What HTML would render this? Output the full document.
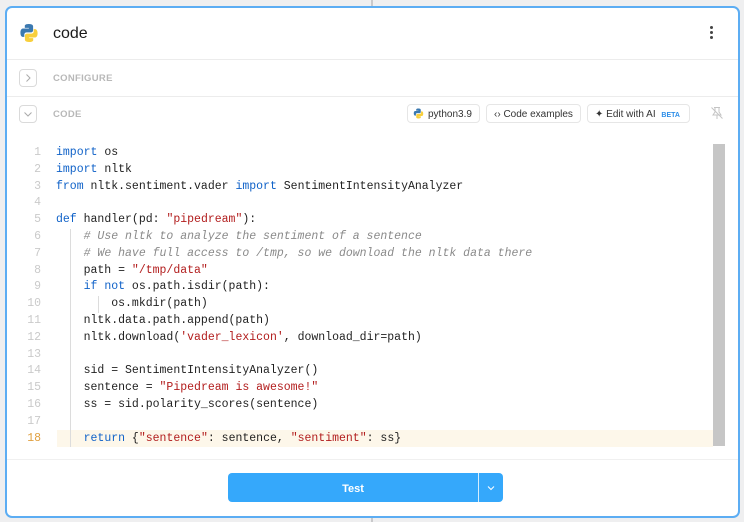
<!DOCTYPE html>
<html><head><meta charset="utf-8"><style>
body{margin:0;width:744px;height:522px;background:#efeff0;position:relative;overflow:hidden;font-family:"Liberation Sans",sans-serif}
.vl{position:absolute;left:371px;width:2px;background:#c9c9cb}
.card{position:absolute;left:5px;top:6px;width:731px;height:508px;border:2px solid #5cadf3;border-radius:7px;background:#fff}
.hdr{position:absolute;left:0;top:0;right:0;height:51px;border-bottom:1px solid #ececec}
.sec{position:absolute;left:0;right:0;height:36px;border-bottom:1px solid #ececec}
.chev{position:absolute;left:12px;width:18px;height:18px;border:1px solid #dadada;border-radius:4px;box-sizing:border-box}
.lbl{position:absolute;left:46px;font-size:9.5px;font-weight:bold;color:#b8b8b8;letter-spacing:.3px}
.btn{position:absolute;top:96px;height:19px;border:1px solid #e6e6e6;border-radius:4px;font-size:10px;color:#333;line-height:19px;padding:0 7px;box-sizing:border-box;white-space:nowrap}
.code{position:absolute;left:0;top:137px;font-family:"Liberation Mono",monospace;font-size:11.5px;line-height:16.8px;color:#1f1f1f}
.ln{position:absolute;left:0;width:34px;text-align:right;color:#cacaca}
.tx{position:absolute;left:49px;white-space:pre}
.k{color:#1062c8}.s{color:#b21d1d}.c{color:#8a8a8a;font-style:italic}
.g{position:absolute;width:1px;background:#dcdcdc}
</style></head><body>
<div class="vl" style="top:0;height:6px"></div><div class="vl" style="top:516px;height:6px"></div>
<div class="card">
 <div class="hdr">
  <svg style="position:absolute;left:12px;top:15px" width="20" height="20" viewBox="0 0 20 20"><path d="M9.8 1C5.5 1 5.8 2.9 5.8 2.9V4.9H9.9V5.5H4.2S1.4 5.2 1.4 9.6 3.8 13.9 3.8 13.9H5.3V11.8S5.2 9.4 7.7 9.4H11.8S14.1 9.4 14.1 7.2V3.5S14.5 1 9.8 1Z" fill="#3b79b0"/><path d="M10.2 19C14.5 19 14.2 17.1 14.2 17.1V15.1H10.1V14.5H15.8S18.6 14.8 18.6 10.4 16.2 6.1 16.2 6.1H14.7V8.2S14.8 10.6 12.3 10.6H8.2S5.9 10.6 5.9 12.8V16.5S5.5 19 10.2 19Z" fill="#f8cf3c"/></svg>
  <div style="position:absolute;left:46px;top:17px;font-size:16px;color:#1a1a1a">code</div>
  <div style="position:absolute;left:703px;top:18px;width:3px;height:14px"><div style="width:3px;height:3px;background:#444;border-radius:50%;margin-bottom:2px"></div><div style="width:3px;height:3px;background:#444;border-radius:50%;margin-bottom:2px"></div><div style="width:3px;height:3px;background:#444;border-radius:50%"></div></div>
 </div>
 <div class="sec" style="top:52px">
  <div class="chev" style="top:9px"><svg width="16" height="16" viewBox="0 0 16 16"><path d="M6.5 4.5L10 8 6.5 11.5" stroke="#aaa" fill="none"/></svg></div>
  <div class="lbl" style="top:13px">CONFIGURE</div>
 </div>
 <div class="chev" style="top:97px"><svg width="16" height="16" viewBox="0 0 16 16"><path d="M4.5 6.5L8 10 11.5 6.5" stroke="#aaa" fill="none"/></svg></div>
 <div class="lbl" style="top:101px">CODE</div>
 <div class="btn" style="left:400px;width:73px;padding-left:20px">python3.9<svg style="position:absolute;left:5px;top:3px" width="11" height="11" viewBox="0 0 20 20"><path d="M9.8 1C5.5 1 5.8 2.9 5.8 2.9V4.9H9.9V5.5H4.2S1.4 5.2 1.4 9.6 3.8 13.9 3.8 13.9H5.3V11.8S5.2 9.4 7.7 9.4H11.8S14.1 9.4 14.1 7.2V3.5S14.5 1 9.8 1Z" fill="#3b79b0"/><path d="M10.2 19C14.5 19 14.2 17.1 14.2 17.1V15.1H10.1V14.5H15.8S18.6 14.8 18.6 10.4 16.2 6.1 16.2 6.1H14.7V8.2S14.8 10.6 12.3 10.6H8.2S5.9 10.6 5.9 12.8V16.5S5.5 19 10.2 19Z" fill="#f8cf3c"/></svg></div>
 <div class="btn" style="left:479px;width:95px">&lsaquo;&rsaquo; Code examples</div>
 <div class="btn" style="left:580px;width:103px">✦ Edit with AI <span style="color:#2d8ee8;font-size:7px;font-weight:bold;margin-left:3px">BETA</span></div>
 <svg style="position:absolute;left:703px;top:98px" width="14" height="14" viewBox="0 0 14 14"><path d="M4 1.5H10M5 1.5V6L3 9H11L9 6V1.5M7 9V13M1.5 1.5L12.5 12.5" stroke="#c4c4c4" fill="none"/></svg>
 <div style="position:absolute;left:50px;top:422px;width:656px;height:17px;background:#fdf7ea"></div>
 <div style="position:absolute;left:706px;top:136px;width:12px;height:302px;background:#c6c6c6"></div>
 <div class="g" style="left:63px;top:221px;height:218px"></div>
 <div class="g" style="left:91px;top:288px;height:17px"></div>
 <div class="code">
  <div class="ln" style="top:0">1</div><div class="ln" style="top:16.8px">2</div><div class="ln" style="top:33.6px">3</div><div class="ln" style="top:50.4px">4</div><div class="ln" style="top:67.2px">5</div><div class="ln" style="top:84px">6</div><div class="ln" style="top:100.8px">7</div><div class="ln" style="top:117.6px">8</div><div class="ln" style="top:134.4px">9</div><div class="ln" style="top:151.2px">10</div><div class="ln" style="top:168px">11</div><div class="ln" style="top:184.8px">12</div><div class="ln" style="top:201.6px">13</div><div class="ln" style="top:218.4px">14</div><div class="ln" style="top:235.2px">15</div><div class="ln" style="top:252px">16</div><div class="ln" style="top:268.8px">17</div><div class="ln" style="top:285.6px;color:#e0a040">18</div>
  <div class="tx"><span class="k">import</span> os
<span class="k">import</span> nltk
<span class="k">from</span> nltk.sentiment.vader <span class="k">import</span> SentimentIntensityAnalyzer

<span class="k">def</span> handler(pd: <span class="s">"pipedream"</span>):
    <span class="c"># Use nltk to analyze the sentiment of a sentence</span>
    <span class="c"># We have full access to /tmp, so we download the nltk data there</span>
    path = <span class="s">"/tmp/data"</span>
    <span class="k">if not</span> os.path.isdir(path):
        os.mkdir(path)
    nltk.data.path.append(path)
    nltk.download(<span class="s">'vader_lexicon'</span>, download_dir=path)

    sid = SentimentIntensityAnalyzer()
    sentence = <span class="s">"Pipedream is awesome!"</span>
    ss = sid.polarity_scores(sentence)

    <span class="k">return</span> {<span class="s">"sentence"</span>: sentence, <span class="s">"sentiment"</span>: ss}</div>
 </div>
 <div style="position:absolute;left:0;right:0;top:451px;border-top:1px solid #f0f0f0"></div>
 <div style="position:absolute;left:221px;top:465px;width:275px;height:29px;background:#35a8fb;border-radius:4px;color:#fff;font-size:11px;font-weight:bold">
  <div style="position:absolute;left:0;top:2px;width:250px;text-align:center;line-height:29px">Test</div>
  <div style="position:absolute;left:250px;top:0;width:1px;height:29px;background:#fff;opacity:.8"></div>
  <svg style="position:absolute;left:257px;top:9px" width="12" height="12" viewBox="0 0 12 12"><path d="M3 4.5L6 7.5 9 4.5" stroke="#fff" fill="none"/></svg>
 </div>
</div>
</body></html>
